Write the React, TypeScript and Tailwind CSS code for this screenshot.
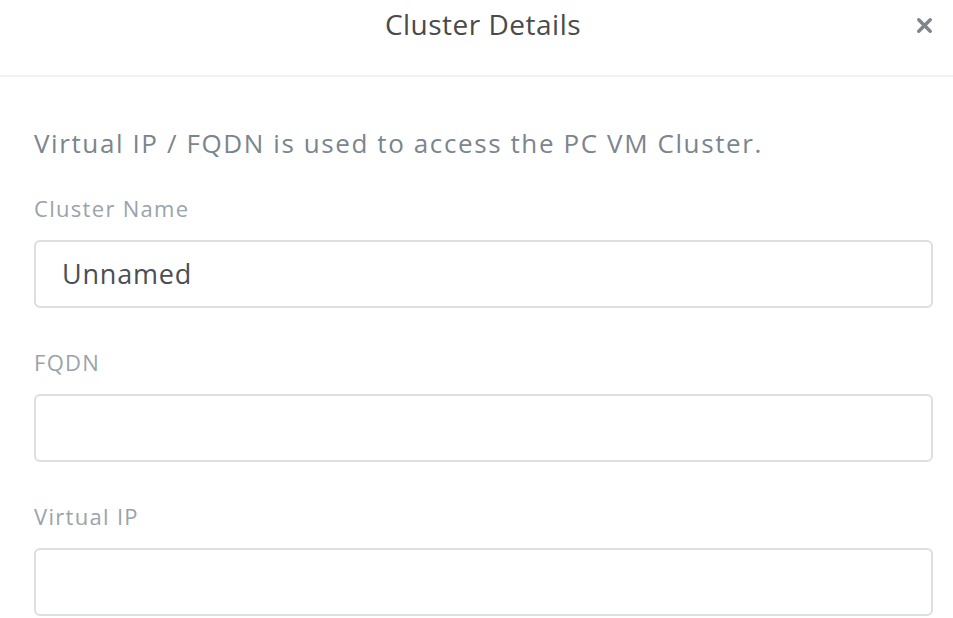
import { X } from "lucide-react";

const font = { fontFamily: "'Open Sans', Lato, sans-serif" };

function Field({ label, value }: { label: string; value?: string }) {
  return (
    <div>
      <div className="h-[32px] flex items-center text-[22px] text-[#9aa3ab] tracking-[1.3px]">{label}</div>
      <div className="mt-[16px] h-[68px] rounded-[6px] border-2 border-[#dcdfe2] bg-white flex items-center px-[26px] text-[27px] tracking-[0.8px] text-[#4a4f55]">
        {value}
      </div>
    </div>
  );
}

export default function App() {
  return (
    <div className="w-[953px] h-[618px] bg-white overflow-hidden" style={font}>
      <div className="relative h-[77px] border-b-2 border-[#f1f2f3] flex justify-center pt-[6px] pl-[13px]">
        <h1 className="text-[28px] text-[#4a4a4a] leading-[36px] tracking-[0.5px]">Cluster Details</h1>
        <button className="absolute right-[17px] top-[14px] text-[#7f858b]">
          <X size={23} strokeWidth={3.6} />
        </button>
      </div>
      <div className="pl-[34px] pr-[20px] pt-[49px]">
        <p className="text-[26px] leading-[34px] tracking-[1.6px] text-[#7b858e] whitespace-nowrap">
          Virtual IP / FQDN is used to access the PC VM Cluster.
        </p>
        <div className="mt-[32px] flex flex-col gap-[38px]">
          <Field label="Cluster Name" value="Unnamed" />
          <Field label="FQDN" />
          <Field label="Virtual IP" />
        </div>
      </div>
    </div>
  );
}
